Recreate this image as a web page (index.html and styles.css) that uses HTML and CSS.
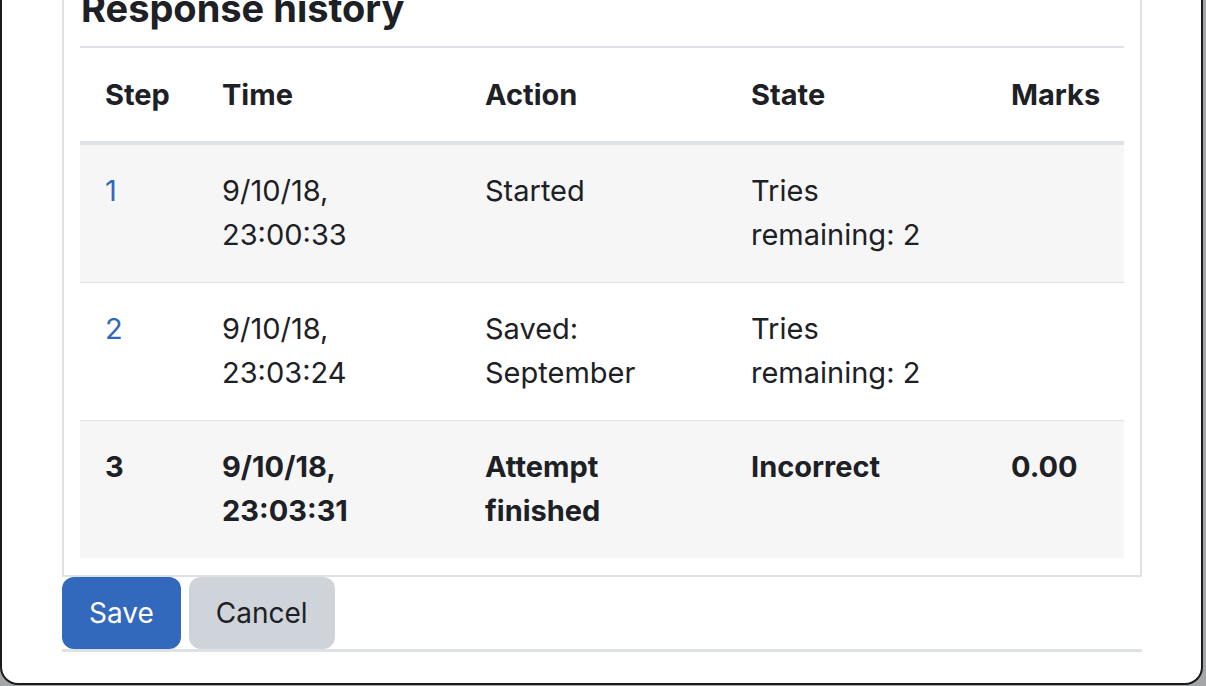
FILE: index.html
```html
<!DOCTYPE html>
<html lang="en">
<head>
<meta charset="utf-8">
<title>Response history</title>
<link rel="stylesheet" href="styles.css">
</head>
<body>
<div class="window">
  <div class="content">
    <section class="box">
      <h3 class="box-title">Response history</h3>
      <table class="history">
        <colgroup>
          <col class="c-step"><col class="c-time"><col class="c-action"><col class="c-state"><col class="c-marks">
        </colgroup>
        <thead>
          <tr><th>Step</th><th>Time</th><th>Action</th><th>State</th><th>Marks</th></tr>
        </thead>
        <tbody>
          <tr class="odd">
            <td><a href="#" class="step-link">1</a></td>
            <td>9/10/18,<br>23:00:33</td>
            <td>Started</td>
            <td>Tries<br>remaining: 2</td>
            <td></td>
          </tr>
          <tr>
            <td><a href="#" class="step-link">2</a></td>
            <td>9/10/18,<br>23:03:24</td>
            <td>Saved:<br>September</td>
            <td>Tries<br>remaining: 2</td>
            <td></td>
          </tr>
          <tr class="odd current">
            <td>3</td>
            <td>9/10/18,<br>23:03:31</td>
            <td>Attempt<br>finished</td>
            <td>Incorrect</td>
            <td>0.00</td>
          </tr>
        </tbody>
      </table>
    </section>
    <div class="actions">
      <button class="btn btn-primary" type="button">Save</button>
      <button class="btn btn-secondary" type="button">Cancel</button>
    </div>
    <div class="footer-rule"></div>
  </div>
</div>
</body>
</html>
```

FILE: styles.css
```css
* { box-sizing: border-box; }

html, body {
  margin: 0;
  padding: 0;
}

body {
  width: 1206px;
  height: 686px;
  background: #a4a6a8;
  font-family: Inter, "Noto Sans", "Liberation Sans", sans-serif;
  color: #1d2125;
  overflow: hidden;
}

.window {
  width: 1203px;
  height: 685px;
  background: #ffffff;
  border: 2px solid #1b1b1b;
  border-top: none;
  border-radius: 0 0 18px 18px;
  overflow: hidden;
}

.content {
  padding: 0 59px 0 60px;
}

.box {
  margin-top: -17px;
  border: 2px solid #dee2e6;
  padding: 0 16px 17px 16px;
}

.box-title {
  margin: 0;
  padding: 0 0 15px 1px;
  font-size: 38px;
  line-height: 46px;
  font-weight: 700;
  border-bottom: 2px solid #dee2e6;
}

.history {
  width: 100%;
  table-layout: fixed;
  border-collapse: separate;
  border-spacing: 0;
  font-size: 29px;
  line-height: 44px;
}

.c-step { width: 117px; }
.c-time { width: 263px; }
.c-action { width: 266px; }
.c-state { width: 260px; }
.c-marks { width: auto; }

.history th,
.history td {
  padding: 24px 20px 25px 25px;
  text-align: left;
  vertical-align: top;
}

.history th {
  padding-top: 25px;
  padding-bottom: 24px;
  font-weight: 700;
  border-bottom: 4px solid #dee2e6;
}

.history td {
  border-bottom: 1px solid #dee2e6;
}

.history tbody tr:last-child td {
  border-bottom: none;
}

.history tr.odd td {
  background: #f6f6f6;
}

.history tr.current td {
  font-weight: 700;
}

.step-link {
  color: #2f69be;
  text-decoration: none;
}

.actions {
  display: flex;
  gap: 8px;
}

.btn {
  font-family: inherit;
  font-size: 28px;
  line-height: 44px;
  padding: 14px 27px;
  border: none;
  border-radius: 12px;
  cursor: pointer;
}

.btn-primary {
  background: #3369bd;
  color: #ffffff;
}

.btn-secondary {
  background: #ced4da;
  color: #1d2125;
}

.footer-rule {
  height: 3px;
  background: #dee2e6;
}
```
